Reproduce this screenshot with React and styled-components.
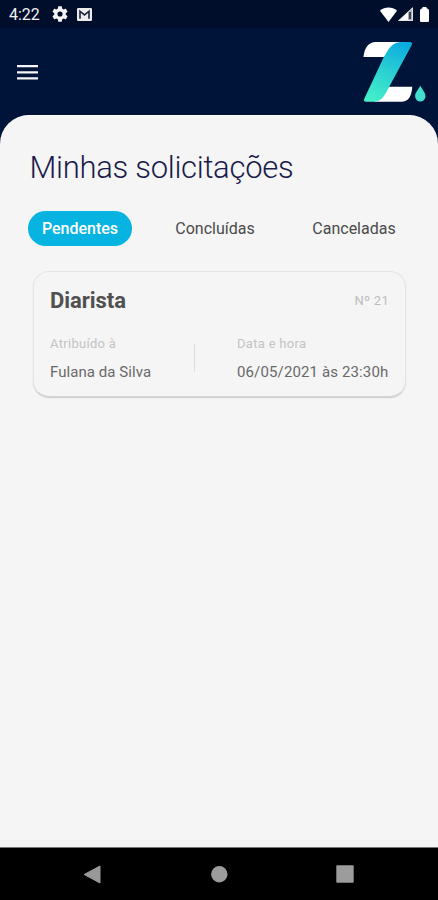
import React from 'react';
import styled, { createGlobalStyle } from 'styled-components';

const GlobalStyle = createGlobalStyle`
  * { box-sizing: border-box; }
  body { margin: 0; background: #001339; font-family: Roboto, sans-serif; }
`;

const Screen = styled.div`
  display: flex;
  flex-direction: column;
  width: 438px;
  height: 900px;
  overflow: hidden;
  background: #001339;
`;

const StatusBar = styled.div`
  display: flex;
  align-items: center;
  height: 28px;
  padding: 0 9px 0 9px;
  background: #000e2b;
  color: #f2f2f2;
`;

const Clock = styled.span`
  width: 43px;
  padding-top: 1px;
  font-size: 16px;
  line-height: 28px;
`;

const StatusIcons = styled.div`
  display: flex;
  align-items: center;
  gap: ${({ $gap }) => $gap}px;
  margin-left: ${({ $end }) => ($end ? 'auto' : '0')};
`;

const Header = styled.header`
  display: flex;
  align-items: flex-start;
  justify-content: space-between;
  height: 87px;
  padding: 13px 11px 0 17px;
`;

const MenuButton = styled.button`
  display: block;
  margin: 24px 0 0;
  padding: 0;
  border: 0;
  background: none;
  line-height: 0;
`;

const Sheet = styled.main`
  flex: 1;
  padding: 33px 28px 0 28px;
  border-top: 1px solid #fff;
  border-radius: 29px 29px 0 0;
  background: #f5f5f5;
`;

const Title = styled.h1`
  margin: 0 0 0 1.5px;
  font-size: 31px;
  font-weight: 300;
  line-height: 38px;
  letter-spacing: -0.29px;
  color: #1b1b4b;
  white-space: nowrap;
`;

const Tabs = styled.nav`
  display: flex;
  margin-top: 24px;
  height: 35px;
`;

const Tab = styled.button`
  flex: none;
  width: ${({ $width }) => $width}px;
  margin: 0 ${({ $after }) => $after || 0}px 0 0;
  padding: 0;
  border: 0;
  border-radius: 18px;
  background: ${({ $active }) => ($active ? '#06b3e1' : 'transparent')};
  color: ${({ $active }) => ($active ? '#fff' : '#4a4a4a')};
  font-family: inherit;
  font-size: 16px;
  font-weight: ${({ $active }) => ($active ? 500 : 400)};
  line-height: 35px;
  white-space: nowrap;
`;

const Card = styled.article`
  width: 373px;
  height: 126px;
  margin: 25px 0 0 5px;
  padding: 15px 16px 0 16px;
  border: 1px solid #e5e5e5;
  border-bottom-color: #d5d5d5;
  border-radius: 16px;
  background: #f5f5f5;
  box-shadow: 0 1px 1px #cecece;
`;

const CardHeader = styled.div`
  display: flex;
  align-items: center;
  justify-content: space-between;
  height: 28px;
`;

const CardTitle = styled.h2`
  margin: 0;
  font-size: 22px;
  font-weight: 700;
  line-height: 28px;
  letter-spacing: -0.05px;
  color: #505050;
`;

const OrderNumber = styled.span`
  margin-top: -1px;
  font-size: 13px;
  letter-spacing: 0.3px;
  color: #bdbdbd;
`;

const Details = styled.div`
  display: flex;
  margin-top: 19px;
`;

const Field = styled.div`
  width: ${({ $width }) => $width}px;
`;

const Label = styled.div`
  font-size: 13px;
  line-height: 20px;
  letter-spacing: 0.3px;
  color: #c4c4c4;
`;

const Value = styled.div`
  margin-top: 7px;
  font-size: 15px;
  line-height: 22px;
  letter-spacing: ${({ $spacing }) => $spacing}px;
  color: #696969;
  white-space: nowrap;
`;

const Divider = styled.div`
  width: 1px;
  height: 28px;
  margin: 10px 42px 0 0;
  background: #dedede;
`;

const NavigationBar = styled.footer`
  display: flex;
  align-items: center;
  justify-content: space-between;
  height: 53px;
  padding: 0 84px 0 83px;
  border-top: 1px solid #777;
  background: #000;
`;

const Drawing = styled.svg`
  display: block;
  flex: none;
`;

function GearIcon() {
  return (
    <Drawing width="16" height="16" viewBox="2 2 20 20" fill="#f2f2f2">
      <path d="M19.14 12.94c.04-.3.06-.61.06-.94s-.02-.64-.07-.94l2.03-1.58a.5.5 0 0 0 .12-.61l-1.92-3.32a.5.5 0 0 0-.59-.22l-2.39.96a7 7 0 0 0-1.62-.94l-.36-2.54a.5.5 0 0 0-.48-.41h-3.84a.5.5 0 0 0-.47.41l-.36 2.54a7 7 0 0 0-1.62.94l-2.39-.96a.5.5 0 0 0-.59.22L2.74 8.87a.5.5 0 0 0 .12.61l2.03 1.58a6 6 0 0 0 0 1.88l-2.03 1.58a.5.5 0 0 0-.12.61l1.92 3.32c.12.22.37.29.59.22l2.39-.96c.5.38 1.03.7 1.62.94l.36 2.54c.05.24.24.41.48.41h3.84c.24 0 .44-.17.47-.41l.36-2.54a7 7 0 0 0 1.62-.94l2.39.96c.22.08.47 0 .59-.22l1.92-3.32a.5.5 0 0 0-.12-.61zM12 15.2a3.2 3.2 0 1 1 0-6.4 3.2 3.2 0 0 1 0 6.4z" />
    </Drawing>
  );
}

function MailIcon() {
  return (
    <Drawing width="15" height="13" viewBox="0 0 15 13">
      <rect width="15" height="13" rx="1.3" fill="#ededed" />
      <path d="M3 10.8V3.2l4.5 3.7L12 3.2v7.6" fill="none" stroke="#17213a" strokeWidth="1.6" />
      <path d="M3 2h9L7.5 5.4z" fill="#ededed" />
    </Drawing>
  );
}

function WifiIcon() {
  return (
    <Drawing width="17" height="15" viewBox="0 0 17 15">
      <path d="M0 3.7C4.7-.6 12.3-.6 17 3.7L8.5 15z" fill="#fff" />
    </Drawing>
  );
}

function SignalIcon() {
  return (
    <Drawing width="15" height="14" viewBox="0 0 15 14">
      <path d="M15 0v14H0z" fill="#a9adb6" />
      <path d="M10 4.7V14H0z" fill="#fff" />
      <path d="M12 5v7" stroke="#182139" strokeWidth="1.5" />
      <path d="M14.5 1v12.5H1.2z" fill="none" stroke="#e3e3e5" />
    </Drawing>
  );
}

function BatteryIcon() {
  return (
    <Drawing width="9" height="15" viewBox="0 0 9 15">
      <path d="M2.5 1.2V0h4v1.2Q9 1.5 9 3.5V14q0 1-1 1H1q-1 0-1-1V3.5q0-2 2.5-2.3z" fill="#fff" />
    </Drawing>
  );
}

function MenuIcon() {
  return (
    <Drawing width="21" height="15" viewBox="0 0 21 15">
      <path d="M0 1.2h21M0 7.3h21M0 13.4h21" stroke="#f5f5fa" strokeWidth="2.2" />
    </Drawing>
  );
}

function Logo() {
  return (
    <Drawing width="64" height="64" viewBox="0 0 64 64">
      <defs>
        <linearGradient id="ribbon" x1="40" y1="0" x2="10" y2="61" gradientUnits="userSpaceOnUse">
          <stop offset="0" stopColor="#08a9df" />
          <stop offset=".5" stopColor="#2bcfd2" />
          <stop offset="1" stopColor="#43f0c9" />
        </linearGradient>
      </defs>
      <path d="M.5 16C1.2 7.5 5.2 1 12.7 1H43L27 16z" fill="#fff" />
      <path d="M26 45.7h23.3C48.6 55 45.8 60.8 38 60.8H11z" fill="#fff" />
      <path d="M20.8 16C26.5 6.5 29.5 1 39 1h7.8c2.2 0 2.8 1.4 1.7 3.4L25 48C20.2 57 17.5 60.8 10.5 60.8H3.2C.9 60.8.4 59.3 1.5 57.3z" fill="url(#ribbon)" />
      <path d="M57.3 44.8c2.2 4 5.2 6.9 5.2 10.4a5.2 5.2 0 0 1-10.4 0c0-3.5 3-6.4 5.2-10.4z" fill="#43dfce" />
    </Drawing>
  );
}

function BackIcon() {
  return (
    <Drawing width="18" height="19" viewBox="0 0 18 19">
      <path d="M17 1v17L1.2 9.5z" fill="#999" stroke="#999" strokeLinejoin="round" />
    </Drawing>
  );
}

function HomeIcon() {
  return (
    <Drawing width="18" height="17" viewBox="0 0 18 17">
      <circle cx="9.3" cy="8.3" r="8.2" fill="#9c9c9c" />
    </Drawing>
  );
}

function RecentsIcon() {
  return (
    <Drawing width="18" height="18" viewBox="0 0 18 18">
      <rect x=".3" y=".3" width="17.4" height="17.4" rx="1" fill="#9c9c9c" />
    </Drawing>
  );
}

export default function App() {
  return (
    <>
      <GlobalStyle />
      <Screen>
        <StatusBar>
          <Clock>4:22</Clock>
          <StatusIcons $gap={9}>
            <GearIcon />
            <MailIcon />
          </StatusIcons>
          <StatusIcons $gap={7} $end>
            <StatusIcons $gap={1}>
              <WifiIcon />
              <SignalIcon />
            </StatusIcons>
            <BatteryIcon />
          </StatusIcons>
        </StatusBar>
        <Header>
          <MenuButton aria-label="Menu">
            <MenuIcon />
          </MenuButton>
          <Logo />
        </Header>
        <Sheet>
          <Title>Minhas solicitações</Title>
          <Tabs>
            <Tab $width={104} $after={29} $active>Pendentes</Tab>
            <Tab $width={108} $after={30}>Concluídas</Tab>
            <Tab $width={110}>Canceladas</Tab>
          </Tabs>
          <Card>
            <CardHeader>
              <CardTitle>Diarista</CardTitle>
              <OrderNumber>Nº 21</OrderNumber>
            </CardHeader>
            <Details>
              <Field $width={144}>
                <Label>Atribuído à</Label>
                <Value $spacing={0.06}>Fulana da Silva</Value>
              </Field>
              <Divider />
              <Field $width={151}>
                <Label>Data e hora</Label>
                <Value $spacing={0.13}>06/05/2021 às 23:30h</Value>
              </Field>
            </Details>
          </Card>
        </Sheet>
        <NavigationBar>
          <BackIcon />
          <HomeIcon />
          <RecentsIcon />
        </NavigationBar>
      </Screen>
    </>
  );
}
